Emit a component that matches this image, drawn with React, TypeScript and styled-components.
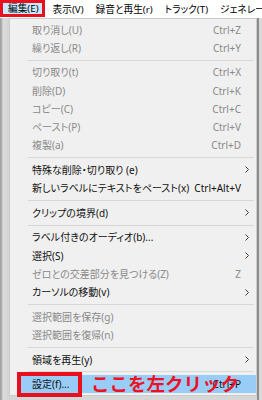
import React from "react";
import styled, { createGlobalStyle } from "styled-components";

const Global = createGlobalStyle`
  html, body { margin: 0; padding: 0; }
  body {
    width: 262px; height: 400px; overflow: hidden;
    background: #d6d6d6;
    font-family: "Noto Sans", "Noto Sans CJK JP", sans-serif;
  }
`;

const Page = styled.div`
  position: relative;
  width: 262px;
  height: 400px;
  display: flex;
  flex-direction: column;
  background: #d6d6d6;
`;

const MenuBar = styled.div`
  height: 18px;
  background: #ffffff;
  display: flex;
  align-items: stretch;
  font-size: 9.7px;
  font-feature-settings: "palt";
  color: #000;
  white-space: nowrap;
  overflow: hidden;
`;

const BarItem = styled.div<{ $active?: boolean }>`
  display: flex;
  align-items: center;
  padding: ${(p) => (p.$active ? "0 3px 1px 5px" : "0 6px 1px 6px")};
  height: ${(p) => (p.$active ? "17px" : "18px")};
  box-sizing: border-box;
  border: ${(p) => (p.$active ? "3px solid #e8101e" : "none")};
  background: ${(p) => (p.$active ? "#cce8ff" : "transparent")};
  margin-right: ${(p) => (p.$active ? "2px" : "0")};
`;

const Body = styled.div`
  flex: 1;
  display: flex;
  align-items: flex-start;
`;

const LeftStrip = styled.div`
  width: 9px;
  align-self: stretch;
  background: linear-gradient(to right, #9c9c9c 0, #b9b9b9 2px, #dcdcdc 3px, #d3d3d3 9px);
`;

const RightStrip = styled.div`
  width: 5px;
  align-self: stretch;
  background: linear-gradient(to right, #8c8c8c 0, #8c8c8c 2px, #d9d9d9 2px);
`;

const Menu = styled.div`
  width: 248px;
  box-sizing: border-box;
  background: #f0f0f0;
  border: 1px solid #cccccc;
  padding: 1.5px 0;
  font-size: 10px;
  font-feature-settings: "palt";
`;

const Item = styled.div<{ $disabled?: boolean; $hot?: boolean }>`
  height: 18.2px;
  display: grid;
  grid-template-columns: minmax(0, 1fr) auto 15px;
  align-items: center;
  margin-left: ${(p) => (p.$hot ? "7px" : "0")};
  padding-left: ${(p) => (p.$hot ? "15px" : "22px")};
  color: ${(p) => (p.$disabled ? "#8a8a8a" : "#111111")};
  background: ${(p) => (p.$hot ? "#99cdf8" : "transparent")};
  white-space: nowrap;
  line-height: 1;
`;

const Label = styled.span``;

const Shortcut = styled.span`
  text-align: right;
`;

const ArrowCell = styled.span`
  display: flex;
  align-items: center;
  padding-left: 4px;
`;

const Separator = styled.div`
  height: 6.5px;
  margin: 0 2px 0 18px;
  display: flex;
  align-items: center;
  &::after {
    content: "";
    display: block;
    width: 100%;
    height: 1px;
    background: #d7d7d7;
  }
`;

const Callout = styled.div`
  position: absolute;
  left: 91px;
  top: 372px;
  font-family: "Noto Sans CJK JP", sans-serif;
  font-weight: 700;
  font-size: 18.5px;
  line-height: 22px;
  color: #ee1122;
  white-space: nowrap;
`;

const RedFrame = styled.div`
  position: absolute;
  left: 17px;
  top: 372px;
  width: 65px;
  height: 25px;
  box-sizing: border-box;
  border: 4px solid #e8101e;
`;

const Chevron = () => (
  <svg width="4" height="7" viewBox="0 0 4 7">
    <polyline points="0.5,0.5 3.5,3.5 0.5,6.5" fill="none" stroke="#3a3a3a" strokeWidth="1" />
  </svg>
);

type Row =
  | { sep: true }
  | { label: string; sc?: string; sub?: boolean; dis?: boolean; hot?: boolean };

const rows: Row[] = [
  { label: "取り消し(U)", sc: "Ctrl+Z", dis: true },
  { label: "繰り返し(R)", sc: "Ctrl+Y", dis: true },
  { sep: true },
  { label: "切り取り(t)", sc: "Ctrl+X", dis: true },
  { label: "削除(D)", sc: "Ctrl+K", dis: true },
  { label: "コピー(C)", sc: "Ctrl+C", dis: true },
  { label: "ペースト(P)", sc: "Ctrl+V", dis: true },
  { label: "複製(a)", sc: "Ctrl+D", dis: true },
  { sep: true },
  { label: "特殊な削除・切り取り (e)", sub: true },
  { label: "新しいラベルにテキストをペースト(x)", sc: "Ctrl+Alt+V" },
  { sep: true },
  { label: "クリップの境界(d)", sub: true },
  { sep: true },
  { label: "ラベル付きのオーディオ(b)...", sub: true },
  { label: "選択(S)", sub: true },
  { label: "ゼロとの交差部分を見つける(Z)", sc: "Z", dis: true },
  { label: "カーソルの移動(v)", sub: true },
  { sep: true },
  { label: "選択範囲を保存(g)", dis: true },
  { label: "選択範囲を復帰(n)", dis: true },
  { sep: true },
  { label: "領域を再生(y)", sub: true },
  { sep: true },
  { label: "設定(f)...", sc: "Ctrl+P", hot: true },
];

export default function App() {
  return (
    <>
      <Global />
      <Page>
        <MenuBar>
          <BarItem $active>編集(E)</BarItem>
          <BarItem>表示(V)</BarItem>
          <BarItem>録音と再生(r)</BarItem>
          <BarItem>トラック(T)</BarItem>
          <BarItem>ジェネレーター</BarItem>
        </MenuBar>
        <Body>
          <LeftStrip />
          <Menu>
            {rows.map((r, i) =>
              "sep" in r ? (
                <Separator key={i} />
              ) : (
                <Item key={i} $disabled={r.dis} $hot={r.hot}>
                  <Label>{r.label}</Label>
                  <Shortcut>{r.sc ?? ""}</Shortcut>
                  <ArrowCell>{r.sub ? <Chevron /> : null}</ArrowCell>
                </Item>
              )
            )}
          </Menu>
          <RightStrip />
        </Body>
        <RedFrame />
        <Callout>ここを左クリック</Callout>
      </Page>
    </>
  );
}
